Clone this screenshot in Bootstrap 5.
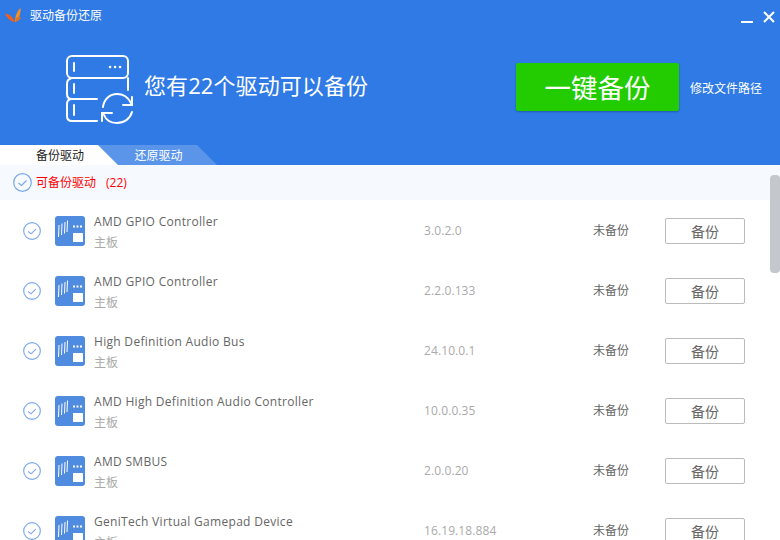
<!DOCTYPE html>
<html lang="zh-CN"><head><meta charset="utf-8"><title>驱动备份还原</title>
<link href="https://cdn.jsdelivr.net/npm/bootstrap@5.3.0/dist/css/bootstrap.min.css" rel="stylesheet">
<style>
html,body{height:540px;overflow:hidden;background:#fff}
body{font-family:"Open Sans","Noto Sans CJK SC",sans-serif;font-size:12px;color:#666}
.app-shell{width:780px;height:540px;overflow:hidden}
.head-blue{background:#2f7ae5;height:165px;color:#fff}
.title-bar{height:30px;padding:0 5px}
.title-text{margin-left:9px;line-height:1;margin-top:1px}
.win-btns{gap:10px;padding-top:3px}
.hero-row{height:115px}
.hero-ico{margin-left:66px;margin-top:4px}
.hero-text{font-size:22px;margin-left:11px;margin-right:auto;margin-top:-4px;line-height:1.2;letter-spacing:.08px}
.big-btn{width:163px;height:48px;background:#22cc00;border:0;border-radius:2px;color:#fff;font-size:26.500px;line-height:50px;padding:0;box-shadow:0 1px 2px rgba(0,0,0,.25);margin-top:-2px}
.big-btn:hover{background:#22cc00;color:#fff}
.path-link{color:#fff;margin:2px 18px 0 11px;text-decoration:none}
.tab-row{height:20px}
.tab-item{height:20px;line-height:21px;text-align:center}
.tab-on{width:118px;background:#fff;color:#222;clip-path:polygon(0 0,98px 0,118px 20px,0 20px);position:relative;z-index:1;padding-left:2px}
.tab-off{width:119px;background:#5b95e9;color:#fff;margin-left:-20px;clip-path:polygon(0 0,99px 0,119px 20px,20px 20px);padding-left:2px}
.sub-head{height:35px;background:#f6f9fe;padding-left:13px;color:#f00;gap:4px;flex:none}
.sub-count{margin-left:6px}
.list-area{overflow:hidden;flex:1;min-height:0}
.drv-row{height:60px;flex:none;padding-left:23px;padding-top:2px}
.drv-ico{margin-left:14px;margin-top:0;flex:none}
.drv-main{width:330px;margin-left:9px;margin-top:3px;line-height:1.2}
.drv-name{font-size:12px;letter-spacing:.3px;color:#666;margin-bottom:6px}
.drv-sub{color:#aaa}
.drv-ver{width:168px;color:#aaa;letter-spacing:.1px}
.drv-state{width:73px;color:#666;padding-left:1px}
.drv-btn{width:80px;height:26px;padding:0;border:1px solid #bbb;border-radius:2px;background:#fff;color:#666;font-size:14px;line-height:26px;margin-top:0}
.scroll-thumb{position:absolute;right:0;top:175px;width:10px;height:98px;background:#c4c7cc;border-radius:4px}
</style></head><body>
<div class="app-shell d-flex flex-column position-relative">
<div class="head-blue d-flex flex-column flex-none">
  <div class="title-bar d-flex align-items-center">
    <svg width="16" height="15" viewBox="0 0 16 15"><path d="M0 5.500C4 6 8 9 10 14C6 14 2 10 0 5.500Z" fill="#f0601c"/><path d="M10 14C10 8 12 3 15.500 0C16 6 14 11 10 14Z" fill="#f5901e"/><path d="M10 14L12 9L16 9.500C15 11.500 13 13 10 14Z" fill="#e8701c"/></svg>
    <span class="title-text">驱动备份还原</span>
    <div class="win-btns d-flex align-items-center ms-auto">
      <svg width="12" height="12" viewBox="0 0 12 12"><path d="M0 11H12" stroke="#fff" stroke-width="2"/></svg>
      <svg width="12" height="12" viewBox="0 0 12 12"><path d="M1 1L11 11M11 1L1 11" stroke="#fff" stroke-width="2"/></svg>
    </div>
  </div>
  <div class="hero-row d-flex align-items-center">
    <svg class="hero-ico" width="67" height="69" viewBox="0 0 67 69" fill="none" stroke="#fff" stroke-width="2" stroke-linecap="round">
      <rect x="1" y="1" width="61" height="22" rx="5"/>
      <path d="M5 23.500C2.500 24 1 26 1 29V39C1 42 3 44 6 44H31M62 23V35"/>
      <path d="M6 44C3 44 1 46 1 49V61C1 64 3 66 6 66H31"/>
      <path d="M8 8V16M8 29V38M8 50V60"/>
      <path d="M44 12h.1M49 12h.1M54 12h.1" stroke-width="2.500"/>
      <path d="M37 52C38 44 44 39 51 39C57 39 62 42 65 48"/>
      <path d="M57 50H66V42"/>
      <path d="M66 57C64 64 58 68 51 68C45 68 40 65 38 60"/>
      <path d="M46 58H36V66"/>
    </svg>
    <span class="hero-text">您有22个驱动可以备份</span>
    <button class="btn big-btn" type="button">一键备份</button>
    <a class="path-link" href="#">修改文件路径</a>
  </div>
  <div class="tab-row d-flex">
    <div class="tab-item tab-on">备份驱动</div>
    <div class="tab-item tab-off">还原驱动</div>
  </div>
</div>
<div class="sub-head d-flex align-items-center">
  <svg width="19" height="19" viewBox="0 0 19 19" fill="none" stroke="#7aa8e8" stroke-width="1.200"><circle cx="9.500" cy="9.500" r="8.800"/><path d="M5.500 10L8.500 12.500L13.500 7.500"/></svg>
  <span>可备份驱动</span><span class="sub-count">(22)</span>
</div>
<div class="list-area" id="drvList"></div>
<div class="scroll-thumb"></div>
</div>
<template id="rowTpl">
<div class="drv-row d-flex align-items-center">
  <svg width="18" height="18" viewBox="0 0 19 19" fill="none" stroke="#7aa8e8" stroke-width="1.200" class="flex-none"><circle cx="9.500" cy="9.500" r="8.800"/><path d="M5.500 10L8.500 12.500L13.500 7.500"/></svg>
  <svg class="drv-ico" width="30" height="30" viewBox="0 0 30 30"><rect width="30" height="30" rx="3" fill="#4f8bde"/><path d="M3.500 21L4 9M6.500 19L7 7.500M9.500 17.500L10 6M12 16L12.500 4.500" stroke="#fff" stroke-width="1"/><path d="M18 10.500h2M21.500 10.500h2M25 10.500h2" stroke="#fff" stroke-width="2"/><rect x="18" y="17" width="10" height="9" fill="#fff"/></svg>
  <div class="drv-main"><div class="drv-name"></div><div class="drv-sub">主板</div></div>
  <div class="drv-ver"></div>
  <div class="drv-state">未备份</div>
  <button class="btn drv-btn" type="button">备份</button>
</div>
</template>
<script>
var rows=[["AMD GPIO Controller","3.0.2.0"],["AMD GPIO Controller","2.2.0.133"],["High Definition Audio Bus","24.10.0.1"],["AMD High Definition Audio Controller","10.0.0.35"],["AMD SMBUS","2.0.0.20"],["GeniTech Virtual Gamepad Device","16.19.18.884"]];
var list=document.getElementById('drvList'),tpl=document.getElementById('rowTpl');
rows.forEach(function(r){var n=tpl.content.cloneNode(true);n.querySelector('.drv-name').textContent=r[0];n.querySelector('.drv-ver').textContent=r[1];list.appendChild(n);});
</script>
<script src="https://cdn.jsdelivr.net/npm/bootstrap@5.3.0/dist/js/bootstrap.bundle.min.js"></script>
</body></html>
